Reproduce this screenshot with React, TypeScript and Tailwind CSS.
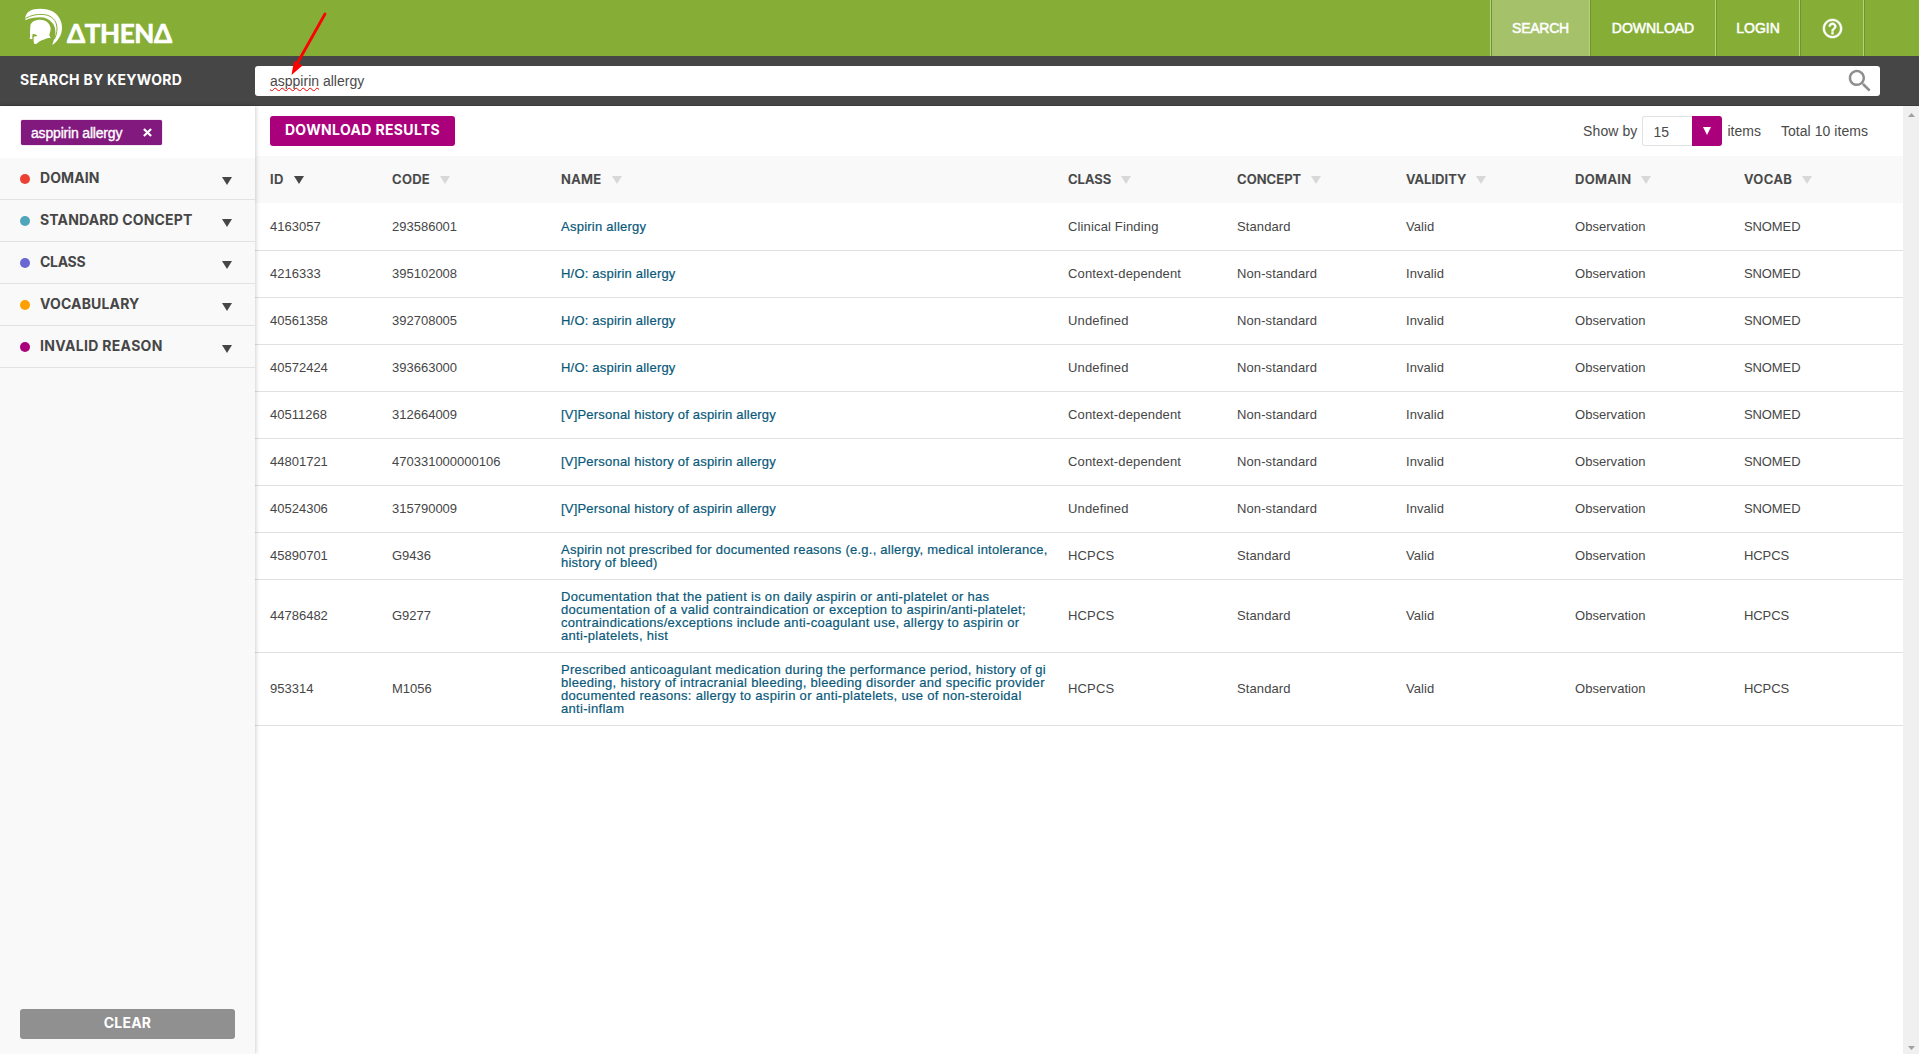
import type { ReactNode } from 'react';

type Row = {
  id: string;
  code: string;
  name: string[];
  cls: string;
  concept: string;
  validity: string;
  vocab: string;
};

const rows: Row[] = [
  { id: '4163057', code: '293586001', name: ['Aspirin allergy'], cls: 'Clinical Finding', concept: 'Standard', validity: 'Valid', vocab: 'SNOMED' },
  { id: '4216333', code: '395102008', name: ['H/O: aspirin allergy'], cls: 'Context-dependent', concept: 'Non-standard', validity: 'Invalid', vocab: 'SNOMED' },
  { id: '40561358', code: '392708005', name: ['H/O: aspirin allergy'], cls: 'Undefined', concept: 'Non-standard', validity: 'Invalid', vocab: 'SNOMED' },
  { id: '40572424', code: '393663000', name: ['H/O: aspirin allergy'], cls: 'Undefined', concept: 'Non-standard', validity: 'Invalid', vocab: 'SNOMED' },
  { id: '40511268', code: '312664009', name: ['[V]Personal history of aspirin allergy'], cls: 'Context-dependent', concept: 'Non-standard', validity: 'Invalid', vocab: 'SNOMED' },
  { id: '44801721', code: '470331000000106', name: ['[V]Personal history of aspirin allergy'], cls: 'Context-dependent', concept: 'Non-standard', validity: 'Invalid', vocab: 'SNOMED' },
  { id: '40524306', code: '315790009', name: ['[V]Personal history of aspirin allergy'], cls: 'Undefined', concept: 'Non-standard', validity: 'Invalid', vocab: 'SNOMED' },
  {
    id: '45890701',
    code: 'G9436',
    name: ['Aspirin not prescribed for documented reasons (e.g., allergy, medical intolerance,', 'history of bleed)'],
    cls: 'HCPCS',
    concept: 'Standard',
    validity: 'Valid',
    vocab: 'HCPCS',
  },
  {
    id: '44786482',
    code: 'G9277',
    name: [
      'Documentation that the patient is on daily aspirin or anti-platelet or has',
      'documentation of a valid contraindication or exception to aspirin/anti-platelet;',
      'contraindications/exceptions include anti-coagulant use, allergy to aspirin or',
      'anti-platelets, hist',
    ],
    cls: 'HCPCS',
    concept: 'Standard',
    validity: 'Valid',
    vocab: 'HCPCS',
  },
  {
    id: '953314',
    code: 'M1056',
    name: [
      'Prescribed anticoagulant medication during the performance period, history of gi',
      'bleeding, history of intracranial bleeding, bleeding disorder and specific provider',
      'documented reasons: allergy to aspirin or anti-platelets, use of non-steroidal',
      'anti-inflam',
    ],
    cls: 'HCPCS',
    concept: 'Standard',
    validity: 'Valid',
    vocab: 'HCPCS',
  },
];

const facets = [
  { label: 'DOMAIN', dot: 'bg-[#ec4032]', tracking: 'tracking-[0.1px]' },
  { label: 'STANDARD CONCEPT', dot: 'bg-[#4fa6bb]', tracking: 'tracking-[0.15px]' },
  { label: 'CLASS', dot: 'bg-[#6a67d3]', tracking: 'tracking-[-0.3px]' },
  { label: 'VOCABULARY', dot: 'bg-[#ffa000]', tracking: 'tracking-[0.15px]' },
  { label: 'INVALID REASON', dot: 'bg-[#ab007c]', tracking: 'tracking-[0.32px]' },
];

const headings = [
  { label: 'ID', tracking: 'tracking-[0.5px]' },
  { label: 'CODE', tracking: 'tracking-[0.3px]' },
  { label: 'NAME', tracking: 'tracking-[0.35px]' },
  { label: 'CLASS', tracking: 'tracking-[0px]' },
  { label: 'CONCEPT', tracking: 'tracking-[0.05px]' },
  { label: 'VALIDITY', tracking: 'tracking-[0.05px]' },
  { label: 'DOMAIN', tracking: 'tracking-[0.35px]' },
  { label: 'VOCAB', tracking: 'tracking-[0.4px]' },
];

const gridCols = 'grid grid-cols-[122px_169px_507px_169px_169px_169px_169px_1fr] items-center pl-[15px]';

function Triangle({ className }: { className: string }) {
  return (
    <svg viewBox="0 0 10 8" preserveAspectRatio="none" className={className} fill="currentColor" aria-hidden>
      <path d="M0 0h10L5 8z" />
    </svg>
  );
}

function Helmet() {
  return (
    <svg viewBox="0 0 150 132" className="h-11 w-[50px]" aria-hidden>
      <path
        fill="#fff"
        d="M17 49C13 32 25 20 43 16C60 13 84 14 101 24C118 35 127 54 126 74C125 94 114 110 97 123C98 114 103 106 106 95C107 82 106 66 97 57C88 46 76 40 60 40C43 40 29 42 17 49Z"
      />
      <path fill="none" stroke="#86ae37" strokeWidth="3" d="M17 43C32 34 50 30 70 31.500C90 33 104 44 109 60C113 74 111 90 103 106" />
      <path
        fill="#fff"
        d="M31 68C31 54 44 47 61 47C79 47 91 59 92 74C92 82 88 88 88 94L92 102C84 101 79 103 74 106C69 108 62 110 57 113L50 119L43 120C40 113 41 105 41 98L52 96C50 91 43 89 38 90L37 96L37 106L29 104C31 97 30 91 30 84Z"
      />
    </svg>
  );
}

function NavItem({ children, width, active }: { children: ReactNode; width: string; active?: boolean }) {
  return (
    <div
      className={`flex h-full items-center justify-center border-l border-r border-l-[#71942c] border-r-[#b6d183] text-[14px] text-white [-webkit-text-stroke:0.5px_white] ${width} ${active ? 'bg-[#a5c26b]' : ''}`}
    >
      {children}
    </div>
  );
}

function Header() {
  return (
    <header className="flex h-14 shrink-0 items-center bg-[#86ae37]">
      <div className="flex h-full items-start pl-5 pt-1" aria-label="ATHENA">
        <Helmet />
        <span className="-ml-[3px] mt-[14px] font-['Lato'] text-[26px] leading-[31px] font-bold tracking-[-0.35px] text-white [-webkit-text-stroke:0.7px_white]">ΔTHENΔ</span>
      </div>
      <nav className="ml-auto flex h-full border-l border-[#b6d183]">
        <NavItem width="w-[99px] tracking-[-0.25px]" active>SEARCH</NavItem>
        <NavItem width="w-[126px]">DOWNLOAD</NavItem>
        <NavItem width="w-[84px]">LOGIN</NavItem>
        <NavItem width="w-[64px]">
          <svg viewBox="0 0 24 24" className="h-[23px] w-[23px]" fill="white" stroke="white" strokeWidth="0.500">
            <path d="M11 18h2v-2h-2v2zm1-16C6.480 2 2 6.480 2 12s4.480 10 10 10 10-4.480 10-10S17.520 2 12 2zm0 18c-4.410 0-8-3.590-8-8s3.590-8 8-8 8 3.590 8 8-3.590 8-8 8zm0-14c-2.210 0-4 1.790-4 4h2c0-1.100.900-2 2-2s2 .900 2 2c0 2-3 1.750-3 5h2c0-2.250 3-2.500 3-5 0-2.210-1.790-4-4-4z" />
          </svg>
        </NavItem>
      </nav>
      <div className="h-full w-[55px] border-l border-[#71942c]" />
    </header>
  );
}

function SearchBar() {
  return (
    <div className="flex h-[50px] shrink-0 items-center border-b border-[#3b3b3b] bg-[#464646] pr-[39px]">
      <div className="w-[255px] pb-[2px] pl-5 font-['Inter'] text-[14px] leading-5 font-bold tracking-[0.28px] text-white">SEARCH BY KEYWORD</div>
      <div className="flex h-[30px] flex-1 items-center justify-between rounded-[3px] bg-white pr-[5px] pl-[15px] text-[14px] text-[#4a4a4a]">
        <span className="leading-5">
          <span className="underline decoration-[#f00000] decoration-wavy decoration-[0.8px] underline-offset-[1px] [text-decoration-skip-ink:none]">asppirin</span> allergy
        </span>
        <svg viewBox="0 0 24 24" className="h-[30px] w-[30px]" fill="#8e8e8e">
          <path d="M15.500 14h-.790l-.280-.270C15.410 12.590 16 11.110 16 9.500 16 5.910 13.090 3 9.500 3S3 5.910 3 9.500 5.910 16 9.500 16c1.610 0 3.090-.590 4.230-1.570l.270.280v.790l5 4.990L20.490 19l-4.990-5zm-6 0C7.010 14 5 11.990 5 9.500S7.010 5 9.500 5 14 7.010 14 9.500 11.990 14 9.500 14z" />
        </svg>
      </div>
    </div>
  );
}

function Sidebar() {
  return (
    <aside className="z-10 flex w-[255px] shrink-0 flex-col bg-[#f9f9f9] shadow-[1px_0_4px_rgba(0,0,0,0.18)]">
      <div className="h-[52px] bg-white pt-[14px] pl-[21px]">
        <div className="flex h-[25px] w-[141px] items-center justify-between rounded-[2px] bg-[#82197f] px-[10px] text-[14px] tracking-[-0.18px] text-white shadow-[0_0_1px_#82197f] [-webkit-text-stroke:0.35px_white]">
          <span className="leading-5">asppirin allergy</span>
          <svg viewBox="0 0 10 10" className="h-[9px] w-[9px]" stroke="white" strokeWidth="2.400">
            <path d="M1 1l8 8M9 1l-8 8" />
          </svg>
        </div>
      </div>
      {facets.map((f) => (
        <div key={f.label} className="flex h-[42px] items-center border-b border-[#e2e2e2] pr-[23px] pl-5">
          <span className={`h-[10px] w-[10px] rounded-full ${f.dot}`} />
          <span className={`ml-[10px] pb-[2px] font-['Inter'] text-[14px] leading-5 font-bold text-[#464646] ${f.tracking}`}>{f.label}</span>
          <Triangle className="mt-[4px] ml-auto h-[8px] w-[10px] text-[#464646]" />
        </div>
      ))}
      <button className="mx-5 mt-auto mb-[15px] h-[30px] rounded-[3px] bg-[#909090] pb-[3px] font-['Inter'] text-[14px] font-bold tracking-[0.2px] text-white">CLEAR</button>
    </aside>
  );
}

function Toolbar() {
  return (
    <div className="flex h-[50px] items-center pr-[35px] pl-[15px] text-[14px] text-[#4a4a4a]">
      <button className="h-[30px] w-[185px] rounded-[3px] bg-[#ab007c] pb-[3px] font-['Inter'] text-[14px] font-bold tracking-[0.35px] whitespace-nowrap text-white">DOWNLOAD RESULTS</button>
      <span className="ml-auto tracking-[0.1px]">Show by</span>
      <div className="ml-[5px] flex h-[30px] w-[80px]">
        <div className="flex flex-1 items-center rounded-l-[3px] border border-r-0 border-[#e2e2e2] pt-[2px] pl-[10px]">15</div>
        <div className="flex w-[30px] items-center justify-center rounded-r-[3px] bg-[#ab007c] text-white">
          <Triangle className="h-[8px] w-[8px]" />
        </div>
      </div>
      <span className="ml-[5px]">items</span>
      <span className="ml-5 tracking-[0.05px]">Total 10 items</span>
    </div>
  );
}

function Results() {
  return (
    <div className="text-[13px] leading-[13px] text-[#464646]">
      <div className={`h-[47px] bg-[#f9f9f9] ${gridCols}`}>
        {headings.map((h, i) => (
          <div key={h.label} className="flex items-center">
            <span className={`font-['Inter'] font-semibold [-webkit-text-stroke:0.2px_#464646] ${h.tracking}`}>{h.label}</span>
            <Triangle className={`ml-[10px] h-[8px] w-[10px] ${i === 0 ? 'text-[#464646]' : 'text-[#d8d8d8]'}`} />
          </div>
        ))}
      </div>
      {rows.map((r, i) => {
        const cell = i === 0 ? '' : 'pb-[2px]';
        const nameCell = i > 0 && r.name.length === 1 ? 'pb-[2px] tracking-[0.2px]' : r.name.length > 2 ? 'tracking-[0.3px]' : 'tracking-[0.245px]';
        return (
          <div key={r.id} className={`border-b border-[#e0e0e0] py-[10px] ${i === 0 ? 'min-h-[48px]' : 'min-h-[47px]'} ${gridCols}`}>
            <div className={cell}>{r.id}</div>
            <div className={cell}>{r.code}</div>
            <div className={`whitespace-nowrap text-[#09597a] [-webkit-text-stroke:0.2px_#09597a] ${nameCell}`}>
              {r.name.map((line) => (
                <div key={line}>{line}</div>
              ))}
            </div>
            <div className={`tracking-[0.15px] ${cell}`}>{r.cls}</div>
            <div className={`tracking-[0.1px] ${cell}`}>{r.concept}</div>
            <div className={`tracking-[0.05px] ${cell}`}>{r.validity}</div>
            <div className={`tracking-[0.04px] ${cell}`}>Observation</div>
            <div className={`tracking-[-0.1px] ${cell}`}>{r.vocab}</div>
          </div>
        );
      })}
    </div>
  );
}

function ScrollBar() {
  return (
    <div className="flex w-4 shrink-0 flex-col items-center justify-between bg-[#f0f0f0] pt-[7px] pb-[4px] text-[#a0a0a0]">
      <Triangle className="h-[4px] w-[7px] rotate-180" />
      <Triangle className="h-[4px] w-[7px]" />
    </div>
  );
}

export default function App() {
  return (
    <div className="relative flex h-screen flex-col overflow-hidden bg-white font-['Liberation_Sans',Arial,sans-serif]">
      <Header />
      <SearchBar />
      <div className="flex min-h-0 flex-1">
        <Sidebar />
        <main className="min-w-0 flex-1">
          <Toolbar />
          <Results />
        </main>
        <ScrollBar />
      </div>
      <svg viewBox="280 5 60 75" className="pointer-events-none absolute top-[5px] left-[280px] h-[75px] w-[60px]" aria-hidden>
        <path d="M325 14L298 62" stroke="#ff0000" strokeWidth="2.800" strokeLinecap="round" />
        <path d="M291.500 75L294 61L302.500 65.500Z" fill="#ff0000" />
      </svg>
    </div>
  );
}
